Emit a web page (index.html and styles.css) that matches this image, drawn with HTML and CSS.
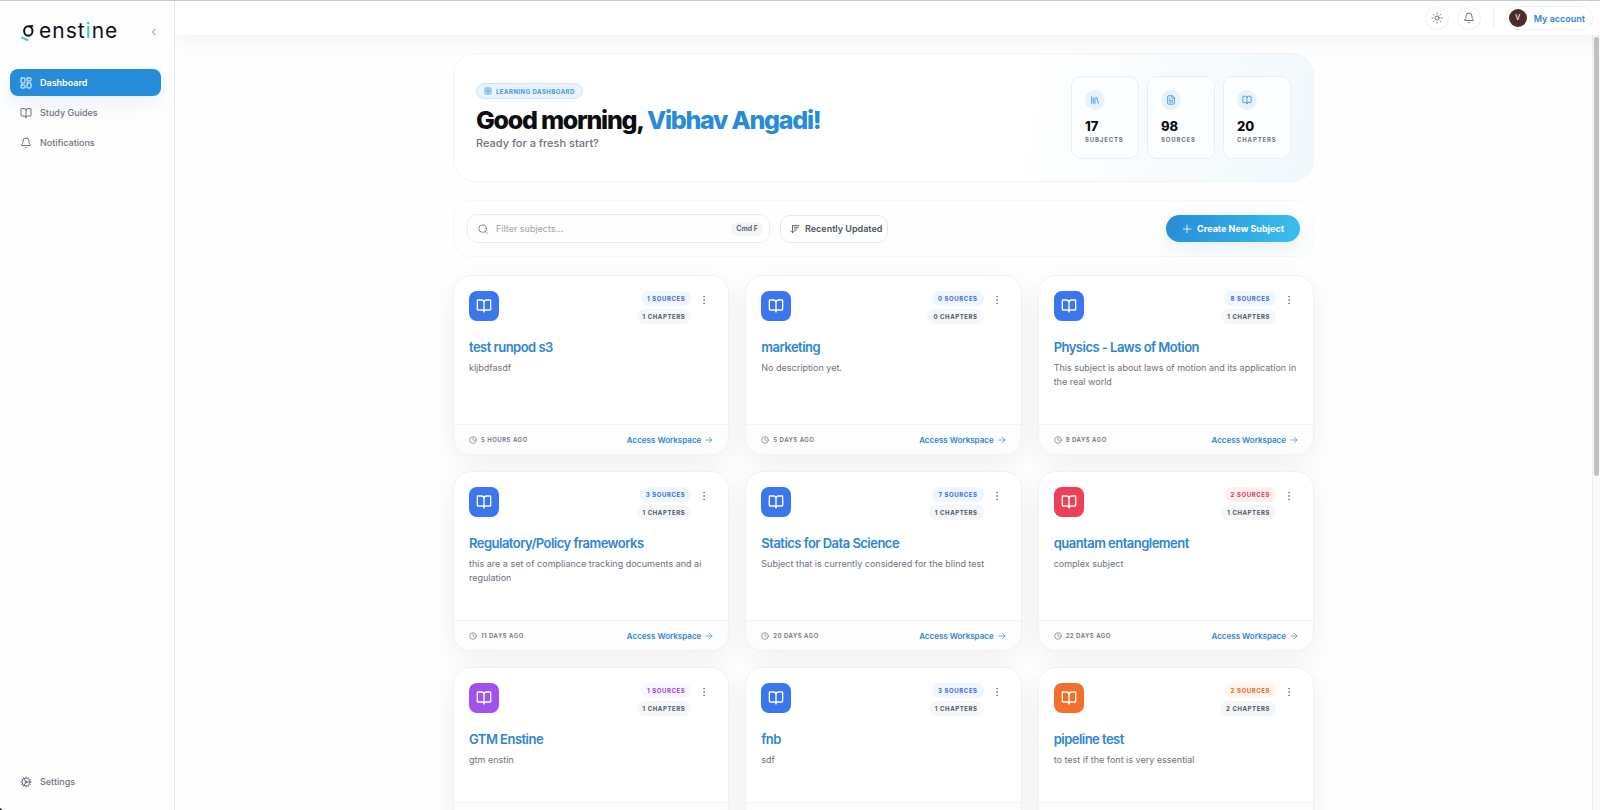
FILE: index.html
```html
<!DOCTYPE html>
<html lang="en">
  <head>
    <meta charset="UTF-8" />
    <meta name="viewport" content="width=device-width, initial-scale=1.0" />
    <title>Enstine - Dashboard</title>
    <link rel="stylesheet" href="styles.css">
  </head>
  <body>
    <!-- Icons -->
    <svg class="sprite" aria-hidden="true">
      <symbol id="book" viewBox="0 0 24 24"><path d="M12 7v14M3 18a1 1 0 0 1-1-1V4a1 1 0 0 1 1-1h5a4 4 0 0 1 4 4 4 4 0 0 1 4-4h5a1 1 0 0 1 1 1v13a1 1 0 0 1-1 1h-6a3 3 0 0 0-3 3 3 3 0 0 0-3-3z" /></symbol>
      <symbol id="bell" viewBox="0 0 24 24"><path d="M10.3 21a2 2 0 0 0 3.4 0M3.3 15.3A1 1 0 0 0 4 17h16a1 1 0 0 0 .7-1.7C19.4 14 18 12.5 18 8A6 6 0 0 0 6 8c0 4.5-1.4 6-2.7 7.3" /></symbol>
      <symbol id="dashboard" viewBox="0 0 24 24"><rect x="2" y="2" width="8" height="10" rx="1" /><rect x="14" y="2" width="8" height="6" rx="1" /><rect x="14" y="12" width="8" height="10" rx="1" /><rect x="2" y="16" width="8" height="6" rx="1" /></symbol>
      <symbol id="clock" viewBox="0 0 24 24"><circle cx="12" cy="12" r="10" /><path d="M12 6v6l4 2" /></symbol>
      <symbol id="arrow" viewBox="0 0 24 24"><path d="M3 12h18M13 4l8 8-8 8" /></symbol>
      <symbol id="dots" viewBox="0 0 24 24"><circle cx="12" cy="12" r="1" /><circle cx="12" cy="4" r="1" /><circle cx="12" cy="20" r="1" /></symbol>
    </svg>

    <aside class="sidebar">
      <div class="brand">
        <div class="logo">
          <svg class="logo-mark" viewBox="0 0 16 24" aria-hidden="true">
            <ellipse cx="8.3" cy="12" rx="4.2" ry="4.8" />
            <path d="M9 7.200c1.500.2 2.800 0 4-.6" />
            <path class="accent" d="M1.300 18.300l7 3" />
          </svg>
          <span class="logo-text">enst<span>i</span>ne</span>
        </div>
        <button class="collapse" aria-label="Collapse sidebar">
          <svg class="icon" viewBox="0 0 24 24"><path d="M15 5l-7 7 7 7" /></svg>
        </button>
      </div>

      <nav class="menu">
        <a href="#" class="active"><svg class="icon"><use href="#dashboard" /></svg>Dashboard</a>
        <a href="#"><svg class="icon"><use href="#book" /></svg>Study Guides</a>
        <a href="#"><svg class="icon"><use href="#bell" /></svg>Notifications</a>
        <a href="#" class="settings">
          <svg class="icon" viewBox="0 0 24 24"><circle cx="12" cy="12" r="8" /><circle cx="12" cy="12" r="2" /><path d="M12 2v2M12 22v-2M17 20.700l-1-1.700M11 10.300 7 3.300M20.700 17l-1.700-1M3.300 7 5 8M14 12h8M2 12h2M20.700 7 19 8M3.300 17 5 16M17 3.300 16 5M11 13.700l-4 7" /></svg>
          Settings
        </a>
      </nav>
    </aside>

    <div class="page">
      <header class="topbar">
        <button class="round" aria-label="Toggle theme">
          <svg class="icon" viewBox="0 0 24 24"><circle cx="12" cy="12" r="4" /><path d="M12 2v2M12 20v2M4.900 4.900l1.400 1.400M17.700 17.700l1.400 1.400M2 12h2M20 12h2M6.300 17.700l-1.400 1.400M19.100 4.900l-1.400 1.400" /></svg>
        </button>
        <button class="round" aria-label="Notifications"><svg class="icon"><use href="#bell" /></svg></button>
        <span class="divider"></span>
        <button class="account"><span class="avatar">V</span>My account</button>
      </header>

      <div class="scroll-area">
        <main class="main">
          <div class="content">
            <section class="hero">
              <div class="welcome">
                <span class="badge">
                  <svg class="icon" viewBox="0 0 24 24"><rect x="3" y="3" width="18" height="18" rx="2" /><path d="M3 12h18M12 3v18M7 7l10 10M17 7 7 17" /></svg>
                  LEARNING DASHBOARD
                </span>
                <h1>Good morning, <span>Vibhav Angadi!</span></h1>
                <p>Ready for a fresh start?</p>
              </div>
              <div class="stats">
                <div class="stat">
                  <span class="stat-icon"><svg class="icon" viewBox="0 0 24 24"><path d="M16 6l4 14M12 6v14M8 8v12M4 4v16" /></svg></span>
                  <strong>17</strong>
                  <small>SUBJECTS</small>
                </div>
                <div class="stat">
                  <span class="stat-icon"><svg class="icon" viewBox="0 0 24 24"><path d="M15 2H6a2 2 0 0 0-2 2v16a2 2 0 0 0 2 2h12a2 2 0 0 0 2-2V7zM14 2v4a2 2 0 0 0 2 2h4M10 9H8M16 13H8M16 17H8" /></svg></span>
                  <strong>98</strong>
                  <small>SOURCES</small>
                </div>
                <div class="stat">
                  <span class="stat-icon"><svg class="icon"><use href="#book" /></svg></span>
                  <strong>20</strong>
                  <small>CHAPTERS</small>
                </div>
              </div>
            </section>

            <section class="toolbar">
              <label class="search">
                <svg class="icon" viewBox="0 0 24 24"><circle cx="11" cy="11" r="9" /><path d="M22 22l-4.500-4.500" /></svg>
                <input type="text" placeholder="Filter subjects..." aria-label="Filter subjects" />
                <kbd>Cmd F</kbd>
              </label>
              <button class="sort">
                <svg class="icon" viewBox="0 0 24 24"><path d="M2 17l4 4 4-4M6 21V4M6 4h16M11 8h9M11 12h6M11 16h2" /></svg>
                Recently Updated
              </button>
              <button class="create">
                <svg class="icon" viewBox="0 0 24 24"><path d="M3 12h18M12 3v18" /></svg>
                Create New Subject
              </button>
            </section>

            <section class="cards" id="cards"></section>
          </div>
        </main>
        <div class="scrollbar"><div class="thumb"></div></div>
      </div>
    </div>

    <script src="script.js"></script>
  </body>
</html>
```
FILE: styles.css
```css
* {
  margin: 0;
  padding: 0;
  box-sizing: border-box;
}

html {
  background-color: #000;
}

body {
  font-family: Inter, 'Helvetica Neue', Arial, sans-serif;
  font-size: 9px;
  color: #6b7280;
  background-color: #fefefe;
  height: 100vh;
  display: flex;
  overflow: hidden;
  border-top: 1px solid #c6c7c8;
  border-bottom-left-radius: 4px;
}

button,
input,
kbd {
  font: inherit;
  color: inherit;
}

button {
  display: flex;
  align-items: center;
  justify-content: center;
  border: none;
  background: none;
  cursor: pointer;
}

a {
  color: inherit;
  text-decoration: none;
}

.sprite {
  display: none;
}

.icon {
  width: 12px;
  height: 12px;
  flex-shrink: 0;
  fill: none;
  stroke: currentColor;
  stroke-width: 2;
  stroke-linecap: round;
  stroke-linejoin: round;
}

/* SIDEBAR */
.sidebar {
  position: relative;
  z-index: 2;
  width: 175px;
  flex-shrink: 0;
  display: flex;
  flex-direction: column;
  border-right: 1px solid #e4e9ed;
  border-bottom-left-radius: 4px;
  background-color: #fefefe;
}

.brand {
  display: flex;
  align-items: center;
  justify-content: space-between;
  height: 62px;
  padding: 0 14px 0 20px;
}

.logo {
  display: flex;
  align-items: center;
  gap: 3px;
  padding-bottom: 2px;
}

.logo-mark {
  width: 16px;
  height: 24px;
  fill: none;
  stroke: #111;
  stroke-width: 2;

  & .accent {
    stroke: #35c3e8;
  }
}

.logo-text {
  font-size: 21px;
  line-height: 26px;
  letter-spacing: 1px;
  color: #111;

  & span {
    color: #35c3e8;
  }
}

.collapse {
  width: 12px;
  height: 12px;

  & .icon {
    width: 10px;
    height: 10px;
  }
}

.menu {
  flex: 1;
  display: flex;
  flex-direction: column;
  gap: 3px;
  padding: 6px 13px 15px 10px;

  & a {
    display: flex;
    align-items: center;
    gap: 8px;
    height: 27px;
    padding: 0 10px;
    border-radius: 8px;
    font-weight: 500;
  }

  & .active {
    color: #fff;
    font-weight: 600;
    background-color: #268bd8;
    box-shadow: 0 8px 18px rgba(38, 139, 216, 0.1);
  }

  & .settings {
    margin-top: auto;
  }
}

/* TOPBAR */
.page {
  flex: 1;
  min-width: 0;
  display: flex;
  flex-direction: column;
}

.topbar {
  position: relative;
  height: 34px;
  flex-shrink: 0;
  display: flex;
  align-items: center;
  justify-content: flex-end;
  gap: 8px;
  padding-right: 7px;
  background-color: #fff;
  box-shadow: 0 4px 24px rgba(0, 0, 0, 0.06);
}

.round {
  width: 24px;
  height: 24px;
  border: 1px solid #eef0f2;
  border-radius: 50%;
}

.divider {
  width: 1px;
  height: 20px;
  margin: 0 4px;
  background-color: #eceef1;
}

.account {
  gap: 7px;
  height: 24px;
  padding: 0 7px 0 2px;
  border: 1px solid #eef0f2;
  border-radius: 12px;
  color: #2d88dc;
  font-weight: 600;
}

.avatar {
  width: 18px;
  height: 18px;
  border-radius: 50%;
  background-color: #4a2c2a;
  color: #fff;
  font-size: 7px;
  line-height: 18px;
  font-weight: 500;
}

/* MAIN */
.scroll-area {
  flex: 1;
  min-height: 0;
  display: flex;
}

.main {
  flex: 1;
  min-width: 0;
  overflow-y: auto;
  padding: 18px 24px;
  scrollbar-width: none;
}

.scrollbar {
  width: 8px;
  padding: 2px 1px;
  border-left: 1px solid #eeeeee;
  background-color: #fafafa;
}

.thumb {
  height: 57%;
  border-radius: 3px;
  background-color: #c1c1c1;
}

.content {
  max-width: 861px;
  margin: 0 auto;
  display: flex;
  flex-direction: column;
  gap: 18px;
}

.hero {
  display: flex;
  align-items: center;
  justify-content: space-between;
  padding: 22px;
  border: 1px solid #f0f3f5;
  border-radius: 22px;
  background: linear-gradient(100deg, #fff 65%, #f1f8fc);
}

.welcome {
  display: flex;
  flex-direction: column;
  align-items: flex-start;

  & h1 {
    margin-top: 6px;
    color: #0b0d10;
    font-size: 25px;
    line-height: 30px;
    font-weight: 800;
    letter-spacing: -0.05em;
  }

  & h1 span {
    color: #268bd8;
  }

  & p {
    font-size: 11px;
    line-height: 17px;
    font-weight: 500;
  }
}

.badge {
  display: flex;
  align-items: center;
  gap: 4px;
  height: 16px;
  padding: 0 7px;
  border: 1px solid #cfe5f7;
  border-radius: 8px;
  background-color: #e9f3fb;
  color: #4598df;
  font-size: 6px;
  font-weight: 700;
  letter-spacing: 0.08em;

  & .icon {
    width: 8px;
    height: 8px;
  }
}

.stats {
  display: flex;
  gap: 8px;
}

.stat {
  width: 68px;
  display: flex;
  flex-direction: column;
  padding: 13px;
  border: 1px solid #e9eef2;
  border-radius: 10px;
  background-color: #fdfeff;

  & strong {
    margin-top: 8px;
    color: #0b0d10;
    font-size: 13px;
    line-height: 16px;
    font-weight: 800;
  }

  & small {
    font-size: 6px;
    line-height: 11px;
    font-weight: 700;
    letter-spacing: 0.14em;
  }
}

.stat-icon {
  display: flex;
  align-items: center;
  justify-content: center;
  width: 20px;
  height: 20px;
  border-radius: 50%;
  background-color: #e7f2fb;
  color: #3a90dc;

  & .icon {
    width: 10px;
    height: 10px;
  }
}

/* TOOLBAR */
.toolbar {
  display: flex;
  align-items: center;
  gap: 10px;
  padding: 13px;
  border: 1px solid #f5f7f8;
  border-radius: 18px;
}

.search {
  display: flex;
  align-items: center;
  gap: 8px;
  width: 303px;
  height: 29px;
  padding: 0 6px 0 10px;
  border: 1px solid #e9edf0;
  border-radius: 10px;

  & .icon {
    width: 10px;
    height: 10px;
  }

  & input {
    flex: 1;
    min-width: 0;
    border: none;
    outline: none;
    background: none;
  }

  & input::placeholder {
    color: #9ca3af;
  }

  & kbd {
    padding: 0 5px;
    border-radius: 7px;
    background-color: #f3f4f6;
    color: #4b5563;
    font-size: 7px;
    line-height: 14px;
    font-weight: 600;
  }
}

.sort {
  gap: 5px;
  height: 28px;
  padding: 0 5px 0 9px;
  border: 1px solid #e5e7eb;
  border-radius: 10px;
  color: #4b5563;
  font-weight: 600;

  & .icon {
    width: 10px;
    height: 10px;
  }
}

.create {
  gap: 5px;
  height: 27px;
  margin-left: auto;
  padding: 0 16px;
  border-radius: 14px;
  background: linear-gradient(110deg, #268bd8, #3bc0ee);
  box-shadow: 0 6px 20px rgba(38, 139, 216, 0.12);
  color: #fff;
  font-weight: 700;

  & .icon {
    width: 10px;
    height: 10px;
  }
}

/* CARDS */
.cards {
  display: grid;
  grid-template-columns: repeat(3, 1fr);
  gap: 16px;
}

.card {
  display: flex;
  flex-direction: column;
  border: 1px solid #eff2f3;
  border-radius: 18px;
  overflow: hidden;
  background-color: #fff;
  box-shadow: 0 8px 28px rgba(0, 0, 0, 0.06);
}

.card-body {
  flex: 1;
  padding: 15px 15px 35px;

  & h2 {
    margin-top: 14px;
    color: #2d85d3;
    font-size: 13px;
    line-height: 18px;
    font-weight: 600;
    letter-spacing: -0.04em;
  }

  & p {
    margin-top: 5px;
    line-height: 14px;
  }
}

.card-top {
  display: flex;
  align-items: flex-start;
}

.tile {
  display: flex;
  align-items: center;
  justify-content: center;
  width: 30px;
  height: 30px;
  border-radius: 8px;
  color: #fff;

  & .icon {
    width: 16px;
    height: 16px;
  }
}

.tags {
  display: flex;
  flex-direction: column;
  align-items: flex-end;
  gap: 3px;
  margin-left: auto;

  & span {
    padding: 0 6px;
    border-radius: 8px;
    background-color: #f5f6f8;
    color: #4b5563;
    font-size: 6px;
    line-height: 15px;
    font-weight: 700;
    letter-spacing: 0.1em;
  }
}

.more {
  width: 10px;
  height: 18px;
  margin: 0 4px 0 8px;

  & .icon {
    width: 10px;
    height: 10px;
  }
}

.blue {
  & .tile {
    background-color: #3b76ee;
  }

  & .sources {
    background-color: #eff6ff;
    color: #3b64e6;
  }
}

.red {
  & .tile {
    background-color: #ee4058;
  }

  & .sources {
    background-color: #fdeef0;
    color: #e0364c;
  }
}

.purple {
  & .tile {
    background-color: #a151ee;
  }

  & .sources {
    background-color: #faf5ff;
    color: #9540e2;
  }
}

.orange {
  & .tile {
    background-color: #f3702a;
  }

  & .sources {
    background-color: #fff5ec;
    color: #ec6426;
  }
}

.card-footer {
  display: flex;
  align-items: center;
  justify-content: space-between;
  height: 30px;
  padding: 0 15px;
  border-top: 1px solid #f1f3f5;
  background-color: #fdfdfe;

  & .icon {
    width: 8px;
    height: 8px;
  }

  & span,
  & a {
    display: flex;
    align-items: center;
    gap: 4px;
  }

  & span {
    font-size: 6px;
    font-weight: 600;
    letter-spacing: 0.08em;
  }

  & a {
    color: #2d85d3;
    font-size: 8px;
    font-weight: 600;
  }
}
```
FILE: script.js
```javascript
const subjects = [
  { title: 'test runpod s3', text: 'kljbdfasdf', sources: 1, chapters: 1, time: '5 HOURS AGO', color: 'blue' },
  { title: 'marketing', text: 'No description yet.', sources: 0, chapters: 0, time: '5 DAYS AGO', color: 'blue' },
  { title: 'Physics - Laws of Motion', text: 'This subject is about laws of motion and its application in the real world', sources: 8, chapters: 1, time: '9 DAYS AGO', color: 'blue' },
  { title: 'Regulatory/Policy frameworks', text: 'this are a set of compliance tracking documents and ai regulation', sources: 3, chapters: 1, time: '11 DAYS AGO', color: 'blue' },
  { title: 'Statics for Data Science', text: 'Subject that is currently considered for the blind test', sources: 7, chapters: 1, time: '20 DAYS AGO', color: 'blue' },
  { title: 'quantam entanglement', text: 'complex subject', sources: 2, chapters: 1, time: '22 DAYS AGO', color: 'red' },
  { title: 'GTM Enstine', text: 'gtm enstin', sources: 1, chapters: 1, time: '23 DAYS AGO', color: 'purple' },
  { title: 'fnb', text: 'sdf', sources: 3, chapters: 1, time: '24 DAYS AGO', color: 'blue' },
  { title: 'pipeline test', text: 'to test if the font is very essential', sources: 2, chapters: 2, time: '25 DAYS AGO', color: 'orange' },
]

document.getElementById('cards').innerHTML = subjects
  .map(
    (subject) => `
      <article class="card ${subject.color}">
        <div class="card-body">
          <div class="card-top">
            <div class="tile"><svg class="icon"><use href="#book" /></svg></div>
            <div class="tags">
              <span class="sources">${subject.sources} SOURCES</span>
              <span>${subject.chapters} CHAPTERS</span>
            </div>
            <button class="more" aria-label="More options"><svg class="icon"><use href="#dots" /></svg></button>
          </div>
          <h2>${subject.title}</h2>
          <p>${subject.text}</p>
        </div>
        <div class="card-footer">
          <span><svg class="icon"><use href="#clock" /></svg>${subject.time}</span>
          <a href="#">Access Workspace <svg class="icon"><use href="#arrow" /></svg></a>
        </div>
      </article>`
  )
  .join('')
```
